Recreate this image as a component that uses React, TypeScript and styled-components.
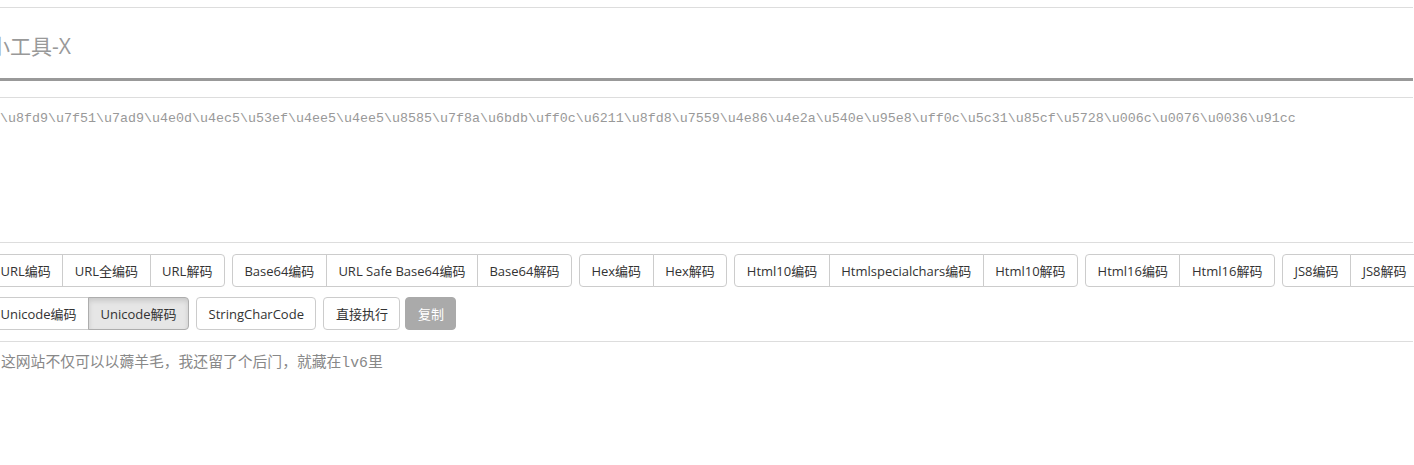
import React from "react";
import styled, { createGlobalStyle } from "styled-components";

const Global = createGlobalStyle`
  html, body { margin: 0; padding: 0; background: #fff; overflow: hidden; }
  body { font-family: "Open Sans", "Noto Sans CJK SC", sans-serif; }
`;

const Page = styled.div`
  margin-left: -12px;
  width: 1425px;
  padding-top: 7px;
`;

const Rule = styled.div<{ $thick?: boolean; $color?: string }>`
  height: 0;
  border-top: ${(p) => (p.$thick ? 3 : 1)}px solid ${(p) => p.$color || "#ddd"};
`;

const Title = styled.h1`
  margin: 0;
  height: 70px;
  box-sizing: border-box;
  padding: 3px 0 0 1px;
  display: flex;
  align-items: center;
  font-family: "Open Sans", "Noto Sans CJK SC", sans-serif;
  font-weight: 400;
  font-size: 21px;
  color: #999;
`;

const InputBox = styled.div`
  margin-top: 16px;
  height: 146px;
  box-sizing: border-box;
  border-top: 1px solid #ddd;
  border-bottom: 1px solid #ddd;
  padding: 12px 12px 0;
  font-family: "Liberation Mono", "Courier New", monospace;
  font-size: 13.33px;
  line-height: 18px;
  color: #999;
  white-space: nowrap;
`;

const Toolbar = styled.div`
  margin-top: 11px;
  display: flex;
  flex-direction: column;
  gap: 10px;
`;

const Row = styled.div`
  display: flex;
  gap: 7px;
  white-space: nowrap;
`;

const Group = styled.div`
  display: flex;
  & > button { border-radius: 0; margin-left: -1px; }
  & > button:first-child { border-radius: 4px 0 0 4px; margin-left: 0; }
  & > button:last-child { border-radius: 0 4px 4px 0; }
`;

const Button = styled.button<{ $active?: boolean; $disabled?: boolean }>`
  height: 33px;
  box-sizing: border-box;
  padding: 0 11.5px;
  font-family: "Open Sans", "Noto Sans CJK SC", sans-serif;
  font-size: 13px;
  color: ${(p) => (p.$disabled ? "#fff" : "#333")};
  background: ${(p) => (p.$disabled ? "#aaa" : p.$active ? "#e6e6e6" : "#fff")};
  border: 1px solid ${(p) => (p.$disabled ? "#aaa" : p.$active ? "#adadad" : "#ccc")};
  border-radius: 4px;
  box-shadow: ${(p) => (p.$active ? "inset 0 3px 5px rgba(0,0,0,0.125)" : "none")};
  cursor: pointer;
  white-space: nowrap;
`;

const CopyButton = styled(Button)`
  margin-left: -2px;
`;

const Output = styled.div`
  margin-top: 11px;
  border-top: 1px solid #ddd;
  padding: 11px 0 0 13px;
  font-family: "Liberation Mono", "Noto Sans CJK SC", monospace;
  font-size: 14.8px;
  line-height: 20px;
  color: #888;
`;

const groups1 = [
  ["URL编码", "URL全编码", "URL解码"],
  ["Base64编码", "URL Safe Base64编码", "Base64解码"],
  ["Hex编码", "Hex解码"],
  ["Html10编码", "Htmlspecialchars编码", "Html10解码"],
  ["Html16编码", "Html16解码"],
  ["JS8编码", "JS8解码"],
];

const encoded =
  "\\u8fd9\\u7f51\\u7ad9\\u4e0d\\u4ec5\\u53ef\\u4ee5\\u4ee5\\u8585\\u7f8a\\u6bdb\\uff0c\\u6211\\u8fd8\\u7559\\u4e86\\u4e2a\\u540e\\u95e8\\uff0c\\u5c31\\u85cf\\u5728\\u006c\\u0076\\u0036\\u91cc";

export default function App() {
  return (
    <>
      <Global />
      <Page>
        <Rule />
        <Title>小工具-X</Title>
        <Rule $thick $color="#999" />
        <InputBox>{encoded}</InputBox>
        <Toolbar>
          <Row>
            {groups1.map((g, i) => (
              <Group key={i}>
                {g.map((b) => (
                  <Button key={b}>{b}</Button>
                ))}
              </Group>
            ))}
          </Row>
          <Row>
            <Group>
              <Button>Unicode编码</Button>
              <Button $active>Unicode解码</Button>
            </Group>
            <Button>StringCharCode</Button>
            <Button>直接执行</Button>
            <CopyButton $disabled>复制</CopyButton>
          </Row>
        </Toolbar>
        <Output>这网站不仅可以以薅羊毛，我还留了个后门，就藏在lv6里</Output>
      </Page>
    </>
  );
}
